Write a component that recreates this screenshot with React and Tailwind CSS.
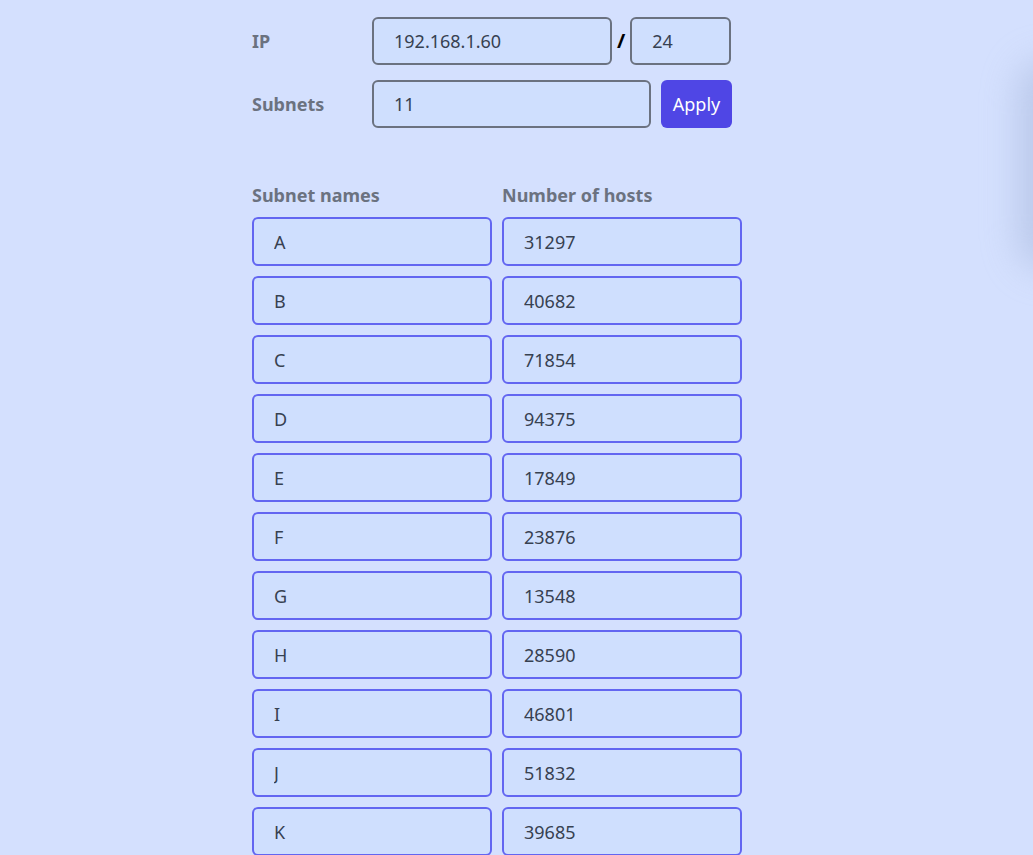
import React, { useState } from 'react';

const rows = [
    ['A', '31297'],
    ['B', '40682'],
    ['C', '71854'],
    ['D', '94375'],
    ['E', '17849'],
    ['F', '23876'],
    ['G', '13548'],
    ['H', '28590'],
    ['I', '46801'],
    ['J', '51832'],
    ['K', '39685'],
];

const topInput = "h-12 rounded-md border-2 border-[#6b7280] bg-[#cfdffe] px-5 text-lg text-[#374151] outline-none";
const rowInput = "h-[49px] w-[240px] rounded-md border-2 border-[#6366f1] bg-[#cfdffe] px-5 text-lg text-[#374151] outline-none";

const App = () => {
    const [ip, setIp] = useState('192.168.1.60');
    const [mask, setMask] = useState('24');
    const [subnets, setSubnets] = useState('11');

    return (
        <div className="relative min-h-[855px] overflow-hidden bg-[#d4e0fe] font-['Noto_Sans',sans-serif]">
            {/* soft shadow on the right edge */}
            <div className="pointer-events-none absolute right-[-45px] top-[60px] h-[210px] w-[60px] rounded-full bg-[#a9b9dd] opacity-60 blur-[18px]"></div>

            <div className="ml-[252px] flex w-[490px] flex-col pt-[17px]">
                <div className="flex items-center">
                    <label className="w-[120px] text-lg font-bold text-[#6b7280]">IP</label>
                    <input className={`${topInput} w-[240px]`} value={ip} onChange={(e) => setIp(e.target.value)} />
                    <span className="mx-[5px] text-xl font-bold text-black">/</span>
                    <input className={`${topInput} w-[101px]`} value={mask} onChange={(e) => setMask(e.target.value)} />
                </div>
                <div className="mt-[15px] flex items-center">
                    <label className="w-[120px] text-lg font-bold text-[#6b7280]">Subnets</label>
                    <input className={`${topInput} w-[279px]`} value={subnets} onChange={(e) => setSubnets(e.target.value)} />
                    <button className="ml-[10px] h-12 w-[71px] rounded-md bg-[#4f46e5] text-lg text-white">Apply</button>
                </div>

                <div className="mt-[53px] grid grid-cols-[240px_240px] gap-x-[10px] gap-y-[10px]">
                    <div className="-mb-[2px] text-lg font-bold text-[#6b7280]">Subnet names</div>
                    <div className="-mb-[2px] text-lg font-bold text-[#6b7280]">Number of hosts</div>
                    {rows.map(([name, hosts]) => (
                        <React.Fragment key={name}>
                            <input className={rowInput} defaultValue={name} />
                            <input className={rowInput} defaultValue={hosts} />
                        </React.Fragment>
                    ))}
                </div>
            </div>
        </div>
    );
};

export default App;
